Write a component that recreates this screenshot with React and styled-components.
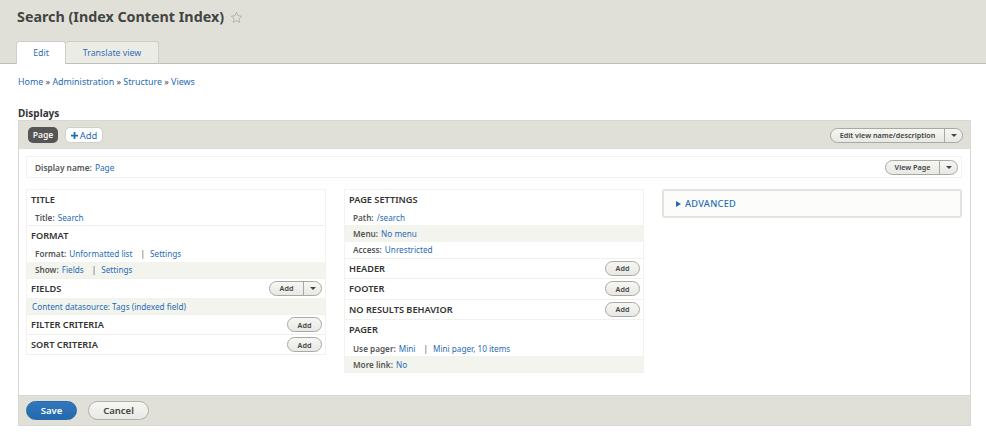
import React from 'react';
import styled, { createGlobalStyle } from 'styled-components';

const GlobalStyle = createGlobalStyle`
  html, body {
    margin: 0;
    padding: 0;
    background: #fff;
    color: #444;
    font-family: "Noto Sans", "DejaVu Sans", sans-serif;
    font-size: 9px;
  }
`;

const Header = styled.header`
  height: 64px;
  box-sizing: border-box;
  background: #e0e0d8;
  border-bottom: 1px solid #bfbfba;
  padding: 8px 16px 0;
  display: flex;
  flex-direction: column;
  justify-content: space-between;
`;

const TitleRow = styled.div`
  display: flex;
  align-items: center;
  gap: 6px;
  padding-left: 1px;
`;

const Title = styled.h1`
  margin: 0;
  font-size: 14.3px;
  line-height: 18px;
  font-weight: 700;
  color: #444;
`;

const Tabs = styled.nav`
  display: flex;
  margin-bottom: -1px;
`;

const Tab = styled.a`
  height: 23px;
  box-sizing: border-box;
  display: flex;
  align-items: center;
  justify-content: center;
  width: ${p => p.$width}px;
  background: ${p => (p.$active ? '#fff' : '#ecece6')};
  border: 1px solid #cfcfc9;
  border-bottom: ${p => (p.$active ? 'none' : '1px solid #bfbfba')};
  border-left: ${p => (p.$active ? '1px solid #cfcfc9' : 'none')};
  border-radius: 3px 3px 0 0;
  color: #2f6fb3;
  font-size: 8.8px;
`;

const Link = styled.a`
  color: #1f6cb5;
`;

const Breadcrumb = styled.div`
  padding: 12px 18px 0;
  font-size: 8.9px;
  line-height: 12px;
  height: 12px;
  color: #444;
`;

const SectionLabel = styled.h2`
  margin: 19px 18px 0;
  font-size: 10px;
  line-height: 12px;
  font-weight: 700;
  color: #333;
`;

const Panel = styled.section`
  margin: 1px 15px 0 18px;
  height: 306px;
  box-sizing: border-box;
  border: 1px solid #d8d8d3;
  display: flex;
  flex-direction: column;
`;

const DisplayBar = styled.div`
  height: 28px;
  flex: none;
  box-sizing: border-box;
  background: #e0e0d8;
  padding: 0 7px 0 9px;
  display: flex;
  align-items: center;
  gap: 7px;
`;

const PagePill = styled.span`
  background: #555;
  color: #f4f4f2;
  font-size: 8.6px;
  font-weight: 600;
  height: 16px;
  width: 30px;
  display: flex;
  align-items: center;
  justify-content: center;
  border-radius: 5px;
`;

const AddPill = styled.span`
  background: #fff;
  color: #1f6cb5;
  font-size: 9.4px;
  height: 16px;
  width: 38px;
  display: flex;
  align-items: center;
  justify-content: center;
  gap: 2px;
  border: 1px solid #d0d0cb;
  box-sizing: border-box;
  border-radius: 5px;
`;

const Spacer = styled.div`
  flex: 1;
`;

const Body = styled.div`
  flex: 1;
  padding: 7px 8px 0 7px;
  display: flex;
  flex-direction: column;
  gap: 11px;
`;

const NameRow = styled.div`
  height: 22px;
  box-sizing: border-box;
  border: 1px solid #f2f2ef;
  padding: 0 3px 0 8px;
  display: flex;
  align-items: center;
  font-size: 8.3px;
`;

const NameLabel = styled.span`
  color: #555;
  font-weight: 600;
  margin-right: 3px;
`;

const Columns = styled.div`
  display: grid;
  grid-template-columns: 300px 300px 300px;
  column-gap: 18px;
  align-items: start;
`;

const Column = styled.div`
  border: 1px solid #f2f2ef;
  border-width: 1px 1px 0;
`;

const Bucket = styled.div`
  border-bottom: 1px solid #f0f0ec;
`;

const BucketHead = styled.div`
  min-height: ${p => p.$height || 19}px;
  box-sizing: border-box;
  padding: 0 3px 0 4px;
  display: flex;
  align-items: center;
  justify-content: space-between;
  font-size: 9.2px;
  font-weight: 600;
  color: #333;
`;

const Row = styled.div`
  height: 16.3px;
  box-sizing: border-box;
  padding: 0 ${p => (p.$flush ? 5 : 8)}px;
  display: flex;
  align-items: center;
  background: ${p => (p.$odd ? '#f3f4ee' : 'transparent')};
  font-size: 8.2px;
  white-space: pre;
`;

const RowLabel = styled.span`
  color: #555;
  font-weight: 600;
  margin-right: 3px;
`;

const Sep = styled.span`
  color: #555;
  margin: 0 5px 0 8px;
`;

const PillButton = styled.span`
  height: 15px;
  width: ${p => p.$width}px;
  box-sizing: border-box;
  display: inline-flex;
  align-items: center;
  justify-content: center;
  background: linear-gradient(#f6f6f3, #e8e8e4);
  border: 1px solid #a8a8a4;
  border-radius: 9px;
  font-size: 7.2px;
  font-weight: 600;
  color: #444;
`;

const Split = styled.span`
  display: inline-flex;
  height: 15px;
  box-sizing: border-box;
  background: linear-gradient(#f6f6f3, #e8e8e4);
  border: 1px solid #a8a8a4;
  border-radius: 9px;
  font-size: 7.2px;
  font-weight: 600;
  color: #444;
`;

const SplitMain = styled.span`
  width: ${p => p.$width}px;
  display: flex;
  align-items: center;
  justify-content: center;
  border-right: 1px solid #a8a8a4;
`;

const SplitArrow = styled.span`
  width: 17px;
  display: flex;
  align-items: center;
  justify-content: center;
  &::after {
    content: '';
    border: 3px solid transparent;
    border-top: 3px solid #444;
    border-bottom: none;
  }
`;

const Advanced = styled.div`
  height: 29px;
  box-sizing: border-box;
  border: 2px solid #e2e2de;
  border-radius: 3px;
  background: #fcfcfa;
  padding: 0 12px;
  display: flex;
  align-items: center;
  gap: 4px;
  color: #1f6cb5;
  font-size: 9.2px;
  font-weight: 500;
  letter-spacing: 0.3px;
`;

const Triangle = styled.span`
  border: 3px solid transparent;
  border-left: 5px solid #1f6cb5;
  border-right: none;
`;

const Footer = styled.div`
  height: 30px;
  flex: none;
  box-sizing: border-box;
  background: #e0e0d8;
  border-top: 1px solid #d8d8d3;
  padding: 0 7px;
  display: flex;
  align-items: center;
  gap: 11px;
`;

const FormButton = styled.span`
  height: 19px;
  width: ${p => p.$width}px;
  box-sizing: border-box;
  display: flex;
  align-items: center;
  justify-content: center;
  border-radius: 10px;
  font-size: 9.5px;
  font-weight: 600;
  color: ${p => (p.$primary ? '#fff' : '#444')};
  background: ${p => (p.$primary ? 'linear-gradient(#3277bb, #2369ae)' : 'linear-gradient(#f6f6f3, #e8e8e4)')};
  border: 1px solid ${p => (p.$primary ? '#2a6aa8' : '#b0b0ac')};
`;

const Star = () => (
  <svg width="13" height="13" viewBox="0 0 24 24" fill="none" stroke="#a8a8a2" strokeWidth="1.4">
    <path d="M12 2.5l2.9 6.2 6.7.9-4.9 4.7 1.2 6.7-5.9-3.3-5.9 3.3 1.2-6.7L2.4 9.6l6.7-.9z" />
  </svg>
);

const Add = () => <PillButton $width={35}>Add</PillButton>;

function App() {
  return (
    <>
      <GlobalStyle />
      <Header>
        <TitleRow>
          <Title>Search (Index Content Index)</Title>
          <Star />
        </TitleRow>
        <Tabs>
          <Tab $active $width={50}>Edit</Tab>
          <Tab $width={93}>Translate view</Tab>
        </Tabs>
      </Header>
      <Breadcrumb>
        <Link>Home</Link> » <Link>Administration</Link> » <Link>Structure</Link> » <Link>Views</Link>
      </Breadcrumb>
      <SectionLabel>Displays</SectionLabel>
      <Panel>
        <DisplayBar>
          <PagePill>Page</PagePill>
          <AddPill>
            <svg width="7" height="7" viewBox="0 0 8 8" fill="#1f6cb5"><path d="M3 0h2v3h3v2H5v3H3V5H0V3h3z" /></svg>
            Add
          </AddPill>
          <Spacer />
          <Split>
            <SplitMain $width={113}>Edit view name/description</SplitMain>
            <SplitArrow />
          </Split>
        </DisplayBar>
        <Body>
          <NameRow>
            <NameLabel>Display name:</NameLabel>
            <Link>Page</Link>
            <Spacer />
            <Split>
              <SplitMain $width={53}>View Page</SplitMain>
              <SplitArrow />
            </Split>
          </NameRow>
          <Columns>
            <Column>
              <Bucket>
                <BucketHead>TITLE</BucketHead>
                <Row><RowLabel>Title:</RowLabel><Link>Search</Link></Row>
              </Bucket>
              <Bucket>
                <BucketHead>FORMAT</BucketHead>
                <Row><RowLabel>Format:</RowLabel><Link>Unformatted list</Link><Sep>|</Sep><Link>Settings</Link></Row>
                <Row $odd><RowLabel>Show:</RowLabel><Link>Fields</Link><Sep>|</Sep><Link>Settings</Link></Row>
              </Bucket>
              <Bucket>
                <BucketHead>
                  FIELDS
                  <Split>
                    <SplitMain $width={33}>Add</SplitMain>
                    <SplitArrow />
                  </Split>
                </BucketHead>
                <Row $odd $flush><Link>Content datasource: Tags (indexed field)</Link></Row>
              </Bucket>
              <Bucket>
                <BucketHead>FILTER CRITERIA<Add /></BucketHead>
              </Bucket>
              <Bucket>
                <BucketHead>SORT CRITERIA<Add /></BucketHead>
              </Bucket>
            </Column>
            <Column>
              <Bucket>
                <BucketHead>PAGE SETTINGS</BucketHead>
                <Row><RowLabel>Path:</RowLabel><Link>/search</Link></Row>
                <Row $odd><RowLabel>Menu:</RowLabel><Link>No menu</Link></Row>
                <Row><RowLabel>Access:</RowLabel><Link>Unrestricted</Link></Row>
              </Bucket>
              <Bucket>
                <BucketHead>HEADER<Add /></BucketHead>
              </Bucket>
              <Bucket>
                <BucketHead $height={20}>FOOTER<Add /></BucketHead>
              </Bucket>
              <Bucket>
                <BucketHead>NO RESULTS BEHAVIOR<Add /></BucketHead>
              </Bucket>
              <Bucket>
                <BucketHead $height={20}>PAGER</BucketHead>
                <Row><RowLabel>Use pager:</RowLabel><Link>Mini</Link><Sep>|</Sep><Link>Mini pager, 10 items</Link></Row>
                <Row $odd><RowLabel>More link:</RowLabel><Link>No</Link></Row>
              </Bucket>
            </Column>
            <Advanced>
              <Triangle />
              ADVANCED
            </Advanced>
          </Columns>
        </Body>
        <Footer>
          <FormButton $primary $width={51}>Save</FormButton>
          <FormButton $width={61}>Cancel</FormButton>
        </Footer>
      </Panel>
    </>
  );
}

export default App;
